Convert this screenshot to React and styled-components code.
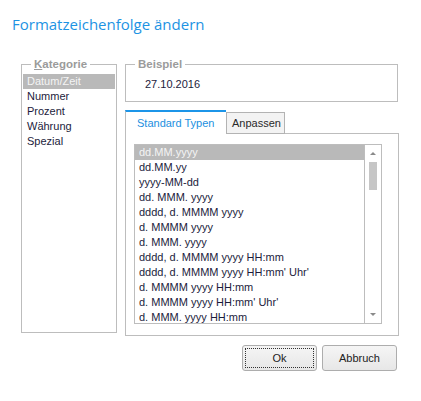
import React from "react";
import styled, { createGlobalStyle } from "styled-components";

const GlobalStyle = createGlobalStyle`
  html, body {
    margin: 0;
    background: #ffffff;
    font-family: "Liberation Sans", Arial, sans-serif;
  }
`;

const categories = ["Datum/Zeit", "Nummer", "Prozent", "Währung", "Spezial"];

const formats = [
  "dd.MM.yyyy",
  "dd.MM.yy",
  "yyyy-MM-dd",
  "dd. MMM. yyyy",
  "dddd, d. MMMM yyyy",
  "d. MMMM yyyy",
  "d. MMM. yyyy",
  "dddd, d. MMMM yyyy HH:mm",
  "dddd, d. MMMM yyyy HH:mm' Uhr'",
  "d. MMMM yyyy HH:mm",
  "d. MMMM yyyy HH:mm' Uhr'",
  "d. MMM. yyyy HH:mm",
];

const StyledDialog = styled.div`
  width: 421px;
  height: 401px;
  box-sizing: border-box;
  padding-top: 12px;
  color: #1c1c3c;
  font-size: 11px;
`;

const Title = styled.h1`
  margin: 0 0 21px 12px;
  font-family: "Open Sans", "Noto Sans", sans-serif;
  font-weight: 400;
  font-size: 15px;
  line-height: 24px;
  color: #1d93e3;
`;

const Body = styled.div`
  display: grid;
  grid-template-columns: 96px 274px;
  column-gap: 8px;
  align-items: start;
  margin-left: 21px;
`;

const Group = styled.fieldset`
  margin: 0;
  padding: 0 1px 1px;
  min-width: 0;
  box-sizing: border-box;
  border: 1px solid #bdbdbd;
  height: ${({ $h }) => $h}px;
  margin-right: ${({ $mr }) => $mr || 0}px;

  legend {
    margin-left: 8px;
    padding: 0 3px;
    font-weight: 700;
    font-size: 11.5px;
    line-height: 14px;
    color: #9b9b9b;
  }

  u {
    text-decoration: underline;
  }
`;

const CategoryList = styled.ul`
  list-style: none;
  margin: 3px 0 0;
  padding: 0;
`;

const Item = styled.li`
  height: 15px;
  line-height: 15px;
  padding-left: 4px;
  white-space: nowrap;
  background: ${({ $selected }) => ($selected ? "#b9b9b9" : "transparent")};
  color: ${({ $selected }) => ($selected ? "#f4f4f4" : "#1c1c3c")};
`;

const Sample = styled.div`
  margin-top: 6px;
  padding-left: 18px;
  line-height: 15px;
`;

const RightColumn = styled.div`
  display: flex;
  flex-direction: column;
  gap: 8px;
`;

const TabStrip = styled.div`
  display: flex;
  align-items: flex-end;
  height: 24px;
`;

const Tab = styled.div`
  box-sizing: border-box;
  white-space: nowrap;
  overflow: hidden;
  ${({ $active }) =>
    $active
      ? `
    width: 101px;
    height: 24px;
    padding: 5px 0 0 11px;
    border-top: 2px solid #1c95e8;
    border-left: 1px solid #bdbdbd;
    color: #1c8fe0;
    background: #ffffff;
  `
      : `
    width: 59px;
    height: 22px;
    padding: 4px 0 0 5px;
    border: 1px solid #b3b3b3;
    background: #f3f3f3;
    color: #2a2a2a;
  `}
`;

const TabFill = styled.div`
  flex: 1;
  border-bottom: 1px solid #bdbdbd;
`;

const TabPanel = styled.div`
  box-sizing: border-box;
  height: 202px;
  padding: 10px 16px 0 8px;
  border: 1px solid #bdbdbd;
  border-top: none;
`;

const ListBox = styled.div`
  display: flex;
  height: 180px;
  box-sizing: border-box;
  border: 1px solid #bdbdbd;
  overflow: hidden;
`;

const FormatList = styled.ul`
  flex: 1;
  list-style: none;
  margin: 0;
  padding: 0;
  overflow: hidden;
`;

const ScrollBar = styled.div`
  width: 16px;
  border-left: 1px solid #bdbdbd;
  display: flex;
  flex-direction: column;
  align-items: center;
`;

const Arrow = styled.div`
  width: 0;
  height: 0;
  margin: ${({ $up }) => ($up ? "7px 0 0" : "auto 0 7px")};
  border-left: 3px solid transparent;
  border-right: 3px solid transparent;
  ${({ $up }) => ($up ? "border-bottom" : "border-top")}: 3px solid #8a8a8a;
`;

const Thumb = styled.div`
  width: 8px;
  height: 28px;
  margin-top: 7px;
  background: #c6c6c6;
`;

const Buttons = styled.div`
  display: flex;
  justify-content: flex-end;
  gap: 5px;
  margin-top: 9px;
  padding-right: 24px;
`;

const Button = styled.button`
  position: relative;
  width: 75px;
  height: 26px;
  padding: 0;
  border: 1px solid #adadad;
  border-radius: 3px;
  background: linear-gradient(#f5f5f5, #e7e7e7);
  font-family: "Liberation Sans", Arial, sans-serif;
  font-size: 11px;
  color: #222222;

  &::after {
    content: "";
    display: ${({ $focus }) => ($focus ? "block" : "none")};
    position: absolute;
    inset: 2px;
    border: 1px dotted #333333;
  }
`;

const App = () => (
  <>
    <GlobalStyle />
    <StyledDialog>
      <Title>Formatzeichenfolge ändern</Title>
      <Body>
        <Group $h={276}>
          <legend>
            <u>K</u>ategorie
          </legend>
          <CategoryList>
            {categories.map((c, i) => (
              <Item key={c} $selected={i === 0}>
                {c}
              </Item>
            ))}
          </CategoryList>
        </Group>

        <RightColumn>
          <Group $h={45} $mr={1}>
            <legend>Beispiel</legend>
            <Sample>27.10.2016</Sample>
          </Group>

          <div>
            <TabStrip>
              <Tab $active>Standard Typen</Tab>
              <Tab>Anpassen</Tab>
              <TabFill />
            </TabStrip>
            <TabPanel>
              <ListBox>
                <FormatList>
                  {formats.map((f, i) => (
                    <Item key={f} $selected={i === 0}>
                      {f}
                    </Item>
                  ))}
                </FormatList>
                <ScrollBar>
                  <Arrow $up />
                  <Thumb />
                  <Arrow />
                </ScrollBar>
              </ListBox>
            </TabPanel>
          </div>
        </RightColumn>
      </Body>
      <Buttons>
        <Button $focus>Ok</Button>
        <Button>Abbruch</Button>
      </Buttons>
    </StyledDialog>
  </>
);

export default App;
